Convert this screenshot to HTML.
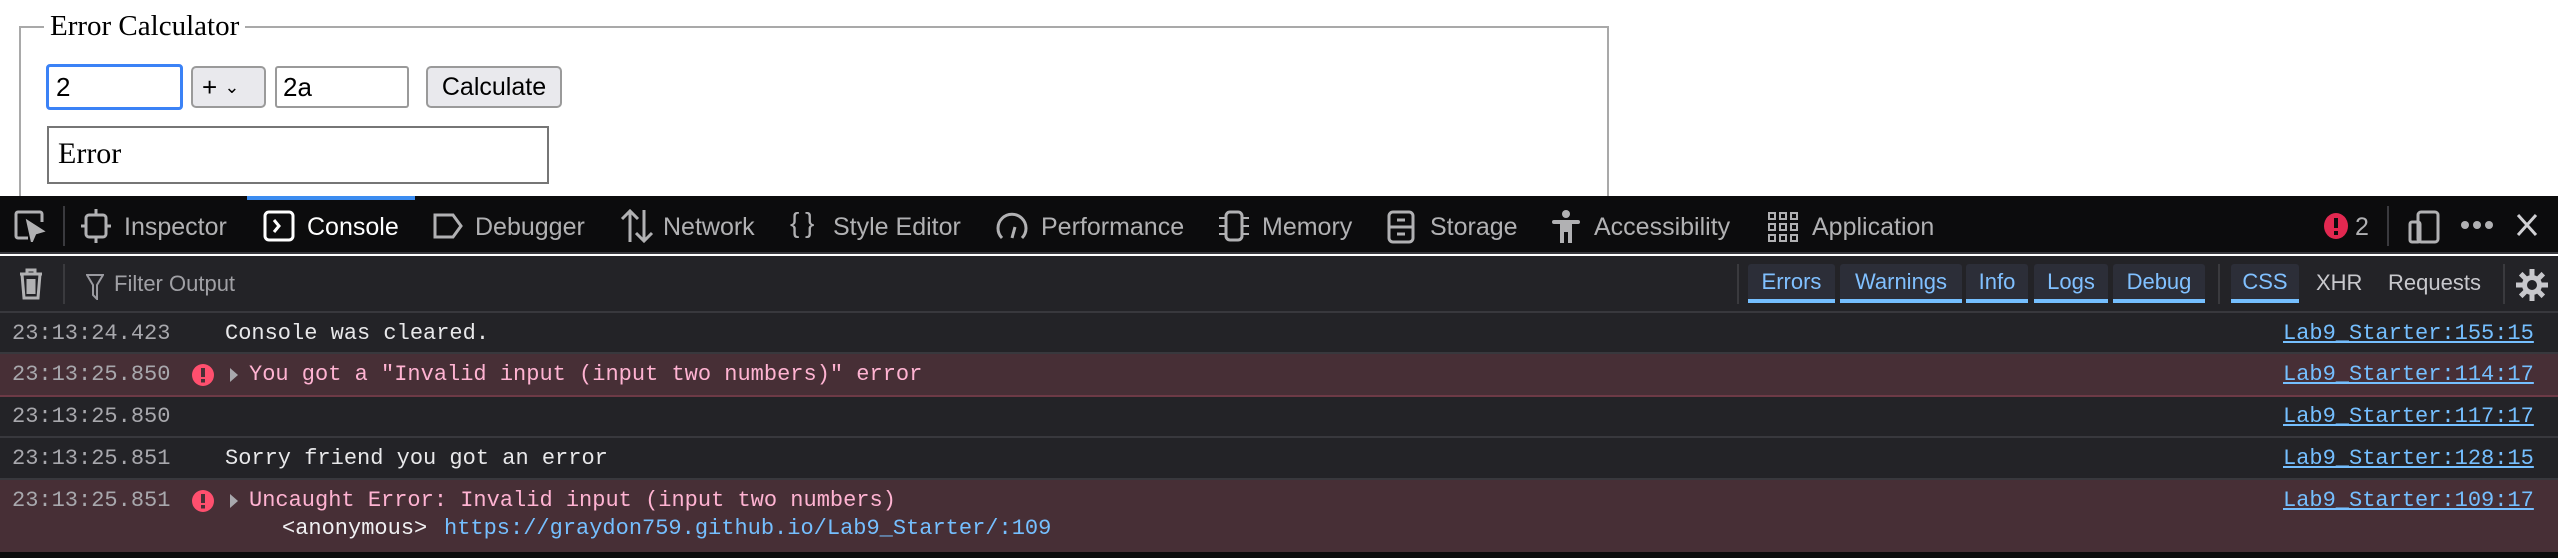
<!DOCTYPE html>
<html><head><meta charset="utf-8"><style>
*{margin:0;padding:0;box-sizing:border-box}
body{width:2558px;height:558px;background:#fff;position:relative;overflow:hidden;font-family:"Liberation Sans",sans-serif}
.a{position:absolute;white-space:nowrap}
.serif{font-family:"Liberation Serif",serif}
.tab{position:absolute;top:213px;font-size:25px;color:#b1b1b3;line-height:28px}
.mono{font-family:"Liberation Mono",monospace;font-size:22px;line-height:26px}
.ts{color:#a8a8ad}
.row{position:absolute;left:0;width:2558px;background:#232327;border-bottom:2px solid #38383d}
.err{background:#472f36;border-bottom:2px solid #6d3a46}
.link{color:#75bfff;text-decoration:underline;position:absolute;left:2283px}
.fb{position:absolute;top:264px;height:39px;background:#2c2e38;border-radius:3px 3px 0 0;border-bottom:4px solid #75bfff;color:#80c0ff;font-size:22px;line-height:36px;text-align:center}
.ic{position:absolute}
</style></head><body>
<div class="a" style="left:19px;top:26px;width:1590px;height:200px;border:2px solid #a9a9a9"></div>
<div class="a serif" style="left:44px;top:8px;background:#fff;padding:0 6px;font-size:29px;line-height:36px;color:#000">Error Calculator</div>
<div class="a" style="left:46px;top:64px;width:137px;height:46px;border:3px solid #3b82f6;border-radius:4px;font-size:26px;line-height:40px;padding-left:7px">2</div>
<div class="a" style="left:191px;top:66px;width:75px;height:42px;border:2px solid #9a9a9a;border-radius:5px;background:#e9e9ed;font-size:26px;line-height:38px;padding-left:9px">+ <span style="font-size:18px;position:relative;top:-3px">&#8964;</span></div>
<div class="a" style="left:275px;top:66px;width:134px;height:42px;border:2px solid #9a9a9a;border-radius:3px;font-size:26px;line-height:38px;padding-left:6px">2a</div>
<div class="a" style="left:426px;top:66px;width:136px;height:42px;border:2px solid #9a9a9a;border-radius:5px;background:#e9e9ed;font-size:25px;line-height:38px;text-align:center">Calculate</div>
<div class="a serif" style="left:47px;top:126px;width:502px;height:58px;border:2px solid #767676;font-size:30px;line-height:52px;padding-left:9px">Error</div>

<div class="a" style="left:0;top:196px;width:2558px;height:58px;background:#0c0c0d;border-bottom:2px solid #38383d"></div>
<div class="a" style="left:247px;top:196px;width:168px;height:4px;background:#3b8cf0"></div>
<svg class="ic" style="left:14px;top:210px" width="34" height="32" viewBox="0 0 34 32" fill="none" stroke="#b1b1b3" stroke-width="3"><path d="M14 28H4a2 2 0 0 1-2-2V4a2 2 0 0 1 2-2h22a2 2 0 0 1 2 2v8"/><path d="M14 12l4 18 3-7 7-2z" fill="#b1b1b3"/></svg>
<div class="a" style="left:63px;top:206px;width:2px;height:40px;background:#3a3a3e"></div>
<svg class="ic" style="left:80px;top:208px" width="32" height="36" viewBox="0 0 32 36" fill="none" stroke="#b1b1b3" stroke-width="3"><rect x="6" y="7" width="20" height="22" rx="3"/><path d="M16 1v6M16 29v6M1 18h5M26 18h5"/></svg>
<div class="tab" style="left:124px">Inspector</div>
<svg class="ic" style="left:263px;top:210px" width="32" height="32" viewBox="0 0 32 32" fill="none" stroke="#fff" stroke-width="3"><rect x="2" y="2" width="28" height="28" rx="4"/><path d="M11 10l5 6-5 6"/></svg>
<div class="tab" style="left:307px;color:#fff">Console</div>
<svg class="ic" style="left:432px;top:212px" width="32" height="28" viewBox="0 0 32 28" fill="none" stroke="#b1b1b3" stroke-width="3"><path d="M3 3h18l8 11-8 11H3z"/></svg>
<div class="tab" style="left:475px">Debugger</div>
<svg class="ic" style="left:619px;top:208px" width="36" height="36" viewBox="0 0 36 36" fill="none" stroke="#b1b1b3" stroke-width="3"><path d="M11 34V3M3 11l8-8 8 8M25 2v31M17 25l8 8 8-8"/></svg>
<div class="tab" style="left:663px">Network</div>
<div class="tab" style="left:790px;font-size:28px;top:209px">{&thinsp;}</div>
<div class="tab" style="left:833px">Style Editor</div>
<svg class="ic" style="left:995px;top:208px" width="34" height="34" viewBox="0 0 34 34" fill="none" stroke="#b1b1b3" stroke-width="3"><path d="M7 30A14 14 0 1 1 27 30"/><path d="M17 30l3-11"/></svg>
<div class="tab" style="left:1041px">Performance</div>
<svg class="ic" style="left:1217px;top:210px" width="34" height="32" viewBox="0 0 34 32" fill="none" stroke="#b1b1b3" stroke-width="3"><rect x="9" y="2" width="16" height="28" rx="4"/><path d="M2 8h6M2 16h6M2 24h6M26 8h6M26 16h6M26 24h6" stroke-width="2"/></svg>
<div class="tab" style="left:1262px">Memory</div>
<svg class="ic" style="left:1387px;top:210px" width="28" height="34" viewBox="0 0 28 34" fill="none" stroke="#b1b1b3" stroke-width="3"><rect x="2" y="2" width="24" height="30" rx="4"/><path d="M2 17h24M10 10h8M10 24h8"/></svg>
<div class="tab" style="left:1430px">Storage</div>
<svg class="ic" style="left:1552px;top:210px" width="28" height="34" viewBox="0 0 28 34" fill="#b1b1b3"><circle cx="14" cy="4" r="4"/><rect x="0" y="10" width="28" height="4" rx="2"/><rect x="8" y="10" width="12" height="12"/><rect x="8" y="20" width="4" height="13"/><rect x="16" y="20" width="4" height="13"/></svg>
<div class="tab" style="left:1594px">Accessibility</div>
<svg class="ic" style="left:1768px;top:212px" width="30" height="30" viewBox="0 0 30 30" fill="none" stroke="#b1b1b3" stroke-width="2"><rect x="1" y="1" width="6" height="6"/><rect x="12" y="1" width="6" height="6"/><rect x="23" y="1" width="6" height="6"/><rect x="1" y="12" width="6" height="6"/><rect x="12" y="12" width="6" height="6"/><rect x="23" y="12" width="6" height="6"/><rect x="1" y="23" width="6" height="6"/><rect x="12" y="23" width="6" height="6"/><rect x="23" y="23" width="6" height="6"/></svg>
<div class="tab" style="left:1812px">Application</div>
<svg class="ic" style="left:2324px;top:213px" width="24" height="26" viewBox="0 0 24 26"><ellipse cx="12" cy="13" rx="12" ry="13" fill="#e22850"/><rect x="10" y="5" width="4" height="10" fill="#0c0c0d"/><rect x="10" y="18" width="4" height="4" fill="#0c0c0d"/></svg>
<div class="tab" style="left:2355px">2</div>
<div class="a" style="left:2387px;top:206px;width:2px;height:40px;background:#3a3a3e"></div>
<svg class="ic" style="left:2408px;top:210px" width="32" height="34" viewBox="0 0 32 34" fill="none" stroke="#b1b1b3" stroke-width="3"><rect x="10" y="2" width="20" height="30" rx="3"/><rect x="2" y="12" width="10" height="20" rx="2"/></svg>
<svg class="ic" style="left:2461px;top:220px" width="32" height="10" viewBox="0 0 32 10" fill="#b1b1b3"><circle cx="4" cy="5" r="4"/><circle cx="16" cy="5" r="4"/><circle cx="28" cy="5" r="4"/></svg>
<svg class="ic" style="left:2516px;top:213px" width="22" height="24" viewBox="0 0 22 24" stroke="#d0d0d3" stroke-width="3"><path d="M2 2l18 20M20 2L2 22"/></svg>

<div class="a" style="left:0;top:256px;width:2558px;height:57px;background:#232327;border-bottom:2px solid #38383d"></div>
<svg class="ic" style="left:18px;top:268px" width="26" height="32" viewBox="0 0 26 32" fill="none" stroke="#b1b1b3" stroke-width="3"><path d="M2 6h22M9 6V2h8v4M4 6l2 24h14l2-24M10 11v15M13 11v15M16 11v15" /></svg>
<div class="a" style="left:63px;top:264px;width:2px;height:40px;background:#3a3a3e"></div>
<svg class="ic" style="left:86px;top:274px" width="18" height="26" viewBox="0 0 18 26" fill="none" stroke="#9a9aa0" stroke-width="2"><path d="M1 1h16l-6 10v14l-4-4V11z"/></svg>
<div class="a" style="left:114px;top:270px;font-size:22px;color:#a0a0a5;line-height:28px">Filter Output</div>
<div class="a" style="left:1737px;top:264px;width:2px;height:40px;background:#3a3a3e"></div>
<div class="fb" style="left:1748px;width:87px">Errors</div>
<div class="fb" style="left:1840px;width:122px">Warnings</div>
<div class="fb" style="left:1966px;width:62px">Info</div>
<div class="fb" style="left:2034px;width:74px">Logs</div>
<div class="fb" style="left:2113px;width:92px">Debug</div>
<div class="a" style="left:2218px;top:264px;width:2px;height:40px;background:#3a3a3e"></div>
<div class="fb" style="left:2231px;width:68px">CSS</div>
<div class="a" style="left:2316px;top:268px;font-size:22px;color:#c8c8cc;line-height:30px">XHR</div>
<div class="a" style="left:2388px;top:268px;font-size:22px;color:#c8c8cc;line-height:30px">Requests</div>
<div class="a" style="left:2503px;top:264px;width:2px;height:40px;background:#3a3a3e"></div>
<svg class="ic" style="left:2515px;top:268px" width="34" height="34" viewBox="0 0 34 34"><g stroke="#c8c8cc" stroke-width="5"><path d="M17 1v32M1 17h32M5.7 5.7l22.6 22.6M28.3 5.7L5.7 28.3"/></g><circle cx="17" cy="17" r="10" fill="#c8c8cc"/><circle cx="17" cy="17" r="5" fill="#232327"/></svg>

<div class="row" style="top:313px;height:41px"></div>
<div class="row err" style="top:354px;height:43px"></div>
<div class="row" style="top:397px;height:41px"></div>
<div class="row" style="top:438px;height:42px"></div>
<div class="row err" style="top:480px;height:72px;border-bottom:none"></div>
<div class="a" style="left:0;top:552px;width:2558px;height:6px;background:#0c0c0d"></div>

<div class="a mono ts" style="left:12px;top:321px">23:13:24.423</div>
<div class="a mono" style="left:225px;top:321px;color:#e8e8ea">Console was cleared.</div>
<div class="a mono link" style="top:321px">Lab9_Starter:155:15</div>

<div class="a mono ts" style="left:12px;top:362px">23:13:25.850</div>
<svg class="ic" style="left:192px;top:364px" width="22" height="22" viewBox="0 0 22 22"><circle cx="11" cy="11" r="11" fill="#ff4f6e"/><rect x="9" y="4" width="4" height="9" fill="#472f36"/><rect x="9" y="15" width="4" height="3.5" fill="#472f36"/></svg>
<svg class="ic" style="left:229px;top:367px" width="10" height="16" viewBox="0 0 10 16"><path d="M1 1l8 7-8 7z" fill="#a8a8ad"/></svg>
<div class="a mono" style="left:249px;top:362px;color:#ffb3d2">You got a "Invalid input (input two numbers)" error</div>
<div class="a mono link" style="top:362px">Lab9_Starter:114:17</div>

<div class="a mono ts" style="left:12px;top:404px">23:13:25.850</div>
<div class="a mono link" style="top:404px">Lab9_Starter:117:17</div>

<div class="a mono ts" style="left:12px;top:446px">23:13:25.851</div>
<div class="a mono" style="left:225px;top:446px;color:#e8e8ea">Sorry friend you got an error</div>
<div class="a mono link" style="top:446px">Lab9_Starter:128:15</div>

<div class="a mono ts" style="left:12px;top:488px">23:13:25.851</div>
<svg class="ic" style="left:192px;top:490px" width="22" height="22" viewBox="0 0 22 22"><circle cx="11" cy="11" r="11" fill="#ff4f6e"/><rect x="9" y="4" width="4" height="9" fill="#472f36"/><rect x="9" y="15" width="4" height="3.5" fill="#472f36"/></svg>
<svg class="ic" style="left:229px;top:493px" width="10" height="16" viewBox="0 0 10 16"><path d="M1 1l8 7-8 7z" fill="#a8a8ad"/></svg>
<div class="a mono" style="left:249px;top:488px;color:#ffb3d2">Uncaught Error: Invalid input (input two numbers)</div>
<div class="a mono link" style="top:488px">Lab9_Starter:109:17</div>
<div class="a mono" style="left:282px;top:516px;color:#f0f0f2">&lt;anonymous&gt;</div>
<div class="a mono" style="left:444px;top:516px;color:#75bfff">https://graydon759.github.io/Lab9_Starter/:109</div>
</body></html>
